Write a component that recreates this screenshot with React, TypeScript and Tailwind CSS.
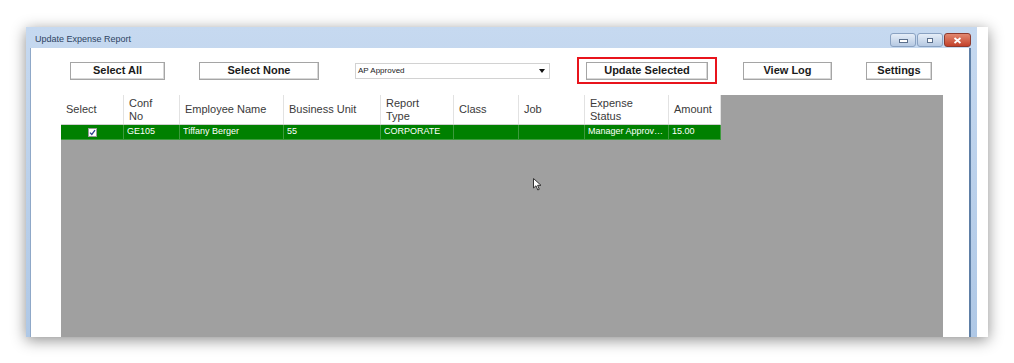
import React from 'react';

const columns = [
  { key: 'select', label: ['Select'], w: 'w-[63px]' },
  { key: 'conf', label: ['Conf', 'No'], w: 'w-[56px]' },
  { key: 'emp', label: ['Employee Name'], w: 'w-[104px]' },
  { key: 'bu', label: ['Business Unit'], w: 'w-[97px]' },
  { key: 'type', label: ['Report', 'Type'], w: 'w-[73px]' },
  { key: 'class', label: ['Class'], w: 'w-[65px]' },
  { key: 'job', label: ['Job'], w: 'w-[66px]' },
  { key: 'status', label: ['Expense', 'Status'], w: 'w-[84px]' },
  { key: 'amount', label: ['Amount'], w: 'w-[52px]' },
];

const row: Record<string, string> = {
  conf: 'GE105',
  emp: 'Tiffany Berger',
  bu: '55',
  type: 'CORPORATE',
  class: '',
  job: '',
  status: 'Manager Approved',
  amount: '15.00',
};

const WinButton = ({ label, className }: { label: string; className: string }) => (
  <button
    className={`h-[18px] bg-white border border-[#a5a5a5] shadow-[inset_-1px_-1px_0_#d8d8d8] text-[11px] font-bold text-[#1a1a1a] flex items-center justify-center ${className}`}
  >
    {label}
  </button>
);

const CheckBox = () => (
  <div className="w-[9px] h-[9px] bg-white border border-[#9a9a9a] flex items-center justify-center">
    <svg width="7" height="7" viewBox="0 0 7 7">
      <path d="M1 3.6 L2.8 5.4 L6 1.2" stroke="#2b3f8c" strokeWidth="1.3" fill="none" />
    </svg>
  </div>
);

export default function App() {
  return (
    <div
      className="w-[1014px] h-[363px] bg-white overflow-hidden pl-[26px] pt-[27px]"
      style={{ fontFamily: '"Liberation Sans", Arial, sans-serif' }}
    >
      <div className="relative w-[962px] h-[310px] flex bg-white shadow-[0_3px_14px_rgba(0,0,0,0.45)]">
        {/* window */}
        <div className="w-[951px] h-full flex flex-col bg-gradient-to-b from-[#c6d9f0] to-[#afc8e6]">
          {/* title bar */}
          <div className="h-[21px] flex items-center pl-[9px] pr-[6px] shrink-0">
            <span className="text-[9px] text-[#2e4463] mt-[5px]">Update Expense Report</span>
            <div className="ml-auto flex items-center gap-[1px] mt-[5px]">
              <div className="w-[26px] h-[14px] rounded-[3px] border border-[#8aa2c2] bg-gradient-to-b from-[#e6eef8] to-[#b6c9e2] flex items-end justify-center pb-[3px]">
                <div className="w-[7px] h-[2px] bg-white border border-[#5b6f8c] box-content" />
              </div>
              <div className="w-[26px] h-[14px] rounded-[3px] border border-[#8aa2c2] bg-gradient-to-b from-[#e6eef8] to-[#b6c9e2] flex items-center justify-center">
                <div className="w-[6px] h-[5px] bg-white border border-[#5b6f8c]" />
              </div>
              <div className="w-[27px] h-[14px] rounded-[3px] border border-[#8d3a2e] bg-gradient-to-b from-[#e2876f] to-[#c2412b] flex items-center justify-center">
                <svg width="9" height="7" viewBox="0 0 9 7">
                  <path d="M1.5 1 L7.5 6 M7.5 1 L1.5 6" stroke="#ffffff" strokeWidth="1.8" />
                </svg>
              </div>
            </div>
          </div>

          {/* client area */}
          <div className="flex-1 flex pl-[4px] pr-[6px]">
            <div className="flex-1 bg-white flex flex-col border-l border-[#8fa8c8]">
              <div className="h-[27px] mt-[9px] flex items-center">
                <WinButton label="Select All" className="ml-[39px] w-[95px]" />
                <WinButton label="Select None" className="ml-[34px] w-[120px]" />
                <div className="ml-[36px] w-[195px] h-[16px] bg-white border border-[#d2d2d2] flex items-center pl-[2px] pr-[4px]">
                  <span className="text-[8px] text-[#222]">AP Approved</span>
                  <svg className="ml-auto" width="6" height="4" viewBox="0 0 6 4">
                    <path d="M0 0 H6 L3 4 Z" fill="#111" />
                  </svg>
                </div>
                <div className="ml-[27px] w-[140px] h-[27px] border-2 border-[#e8141c] flex items-center justify-center">
                  <WinButton label="Update Selected" className="w-[122px]" />
                </div>
                <WinButton label="View Log" className="ml-[26px] w-[89px]" />
                <WinButton label="Settings" className="ml-[34px] w-[66px]" />
              </div>

              {/* grid */}
              <div className="relative mt-[11px] ml-[30px] w-[882px] flex-1 bg-[#a0a0a0]">
                <div className="flex h-[30px] bg-white border-b border-[#cfcfcf] w-[660px]">
                  {columns.map((c) => (
                    <div
                      key={c.key}
                      className={`${c.w} shrink-0 border-r border-[#e2e2e2] flex flex-col justify-center pl-[5px] text-[11px] leading-[13px] text-[#3a3a3a]`}
                    >
                      {c.label.map((l) => (
                        <span key={l}>{l}</span>
                      ))}
                    </div>
                  ))}
                </div>
                <div className="flex h-[15px] bg-[#008000] w-[660px] border-b border-[#3d9a3d]">
                  {columns.map((c) => (
                    <div
                      key={c.key}
                      className={`${c.w} shrink-0 border-r border-[#3d9a3d] flex items-center text-[9px] text-white overflow-hidden ${
                        c.key === 'select' ? 'justify-center' : 'pl-[3px]'
                      }`}
                    >
                      {c.key === 'select' ? (
                        <CheckBox />
                      ) : (
                        <span className="truncate pr-[4px]">{row[c.key]}</span>
                      )}
                    </div>
                  ))}
                </div>

                {/* mouse cursor */}
                <svg className="absolute left-[472px] top-[83px]" width="9" height="13" viewBox="0 0 9 13">
                  <path d="M0.5 0.5 L0.5 10 L3 7.8 L4.8 12 L6.3 11.3 L4.6 7.3 L8 7.3 Z" fill="#ffffff" stroke="#333" strokeWidth="1" />
                </svg>
              </div>
            </div>
            <div className="w-[2px] bg-[#5e7fa6]" />
          </div>
        </div>
        <div className="w-[11px] h-full bg-white" />
      </div>
    </div>
  );
}
